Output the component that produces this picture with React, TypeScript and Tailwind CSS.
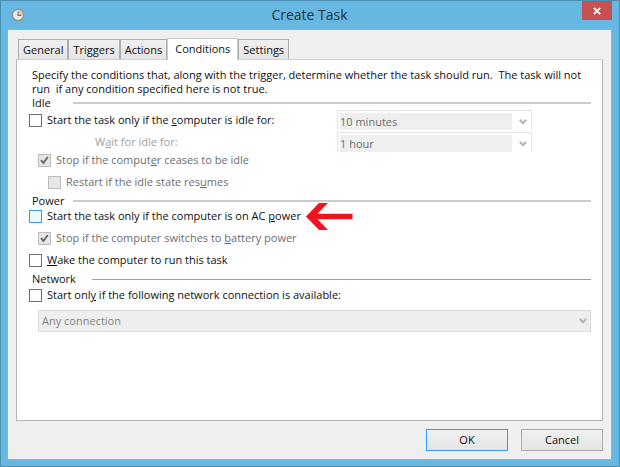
import React, { useState } from "react";
import clsx from "clsx";

const TABS = ["General", "Triggers", "Actions", "Conditions", "Settings"];

function Chevron() {
  return (
    <svg viewBox="0 0 8 6" className="h-[6px] w-2 shrink-0" fill="none" stroke="#b4b4b4" strokeWidth="2">
      <path d="M0.8 0.8 4 4.2 7.2 0.8" />
    </svg>
  );
}

function ClockIcon() {
  return (
    <svg viewBox="0 0 14 14" className="h-[14px] w-[14px]">
      <circle cx="7" cy="7" r="5.6" fill="#e9ebea" stroke="#8d9294" strokeWidth="1.4" />
      <path d="M7 7V2.2A4.8 4.8 0 0 1 11.8 7Z" fill="#f3c98c" />
      <path d="M7 3.4V7.4H10.4" fill="none" stroke="#6b7278" strokeWidth="1.1" />
    </svg>
  );
}

function RedArrow() {
  return (
    <svg viewBox="0 0 48 28" className="-my-2 h-7 w-12" fill="#ee1420" aria-hidden="true">
      <path d="M0 14.5 13 1H22L11.5 11.7H46.5V17.3H11.5L22 28H13Z" />
    </svg>
  );
}

type CheckProps = {
  children: React.ReactNode;
  checked?: boolean;
  disabled?: boolean;
  highlighted?: boolean;
};

function Check({ children, checked, disabled, highlighted }: CheckProps) {
  return (
    <label className={clsx("flex items-center gap-[5px]", disabled && "text-[#6d6d6d]")}>
      <span className="relative flex">
        <input
          type="checkbox"
          defaultChecked={checked}
          disabled={disabled}
          className={clsx(
            "peer h-[13px] w-[13px] appearance-none border",
            disabled
              ? "border-[#bcbcbc] bg-[#e6e6e6]"
              : highlighted
              ? "border-[#3399ff] bg-[#f0f8ff]"
              : "border-[#707070] bg-white"
          )}
        />
        <svg
          viewBox="0 0 13 13"
          className="pointer-events-none absolute inset-0 hidden peer-checked:block"
          fill="none"
          stroke="#6a6a6a"
          strokeWidth="2"
        >
          <path d="M3 6.2 5.4 9 9.8 3" />
        </svg>
      </span>
      <span>{children}</span>
    </label>
  );
}

function Heading({ children, wide }: { children: React.ReactNode; wide?: boolean }) {
  return (
    <div className="flex h-[14px] items-center pl-[3px]">
      <h2 className={wide ? "w-[60px]" : "w-[41px]"}>{children}</h2>
      <span className={clsx("flex-1", wide ? "h-px bg-[#a0a0a0]" : "h-[2px] bg-[#cbcbcb]")} />
    </div>
  );
}

function TimeSelect({ id, label, value }: { id: string; label: string; value: string }) {
  return (
    <div className="flex h-5 w-[195px] border border-b-0 border-[#e3e3e3] pt-[2px] pl-[2px]">
      <select
        id={id}
        aria-label={label}
        disabled
        className="min-w-0 flex-1 appearance-none bg-[#efefef] text-[#6d6d6d] opacity-100"
      >
        <option>{value}</option>
      </select>
      <span className="flex w-[19px] items-center justify-center pl-[3px]">
        <Chevron />
      </span>
    </div>
  );
}

export default function App() {
  const [active, setActive] = useState("Conditions");

  return (
    <div className="flex min-h-screen flex-col border border-[#4a8fb2] bg-[#66b7e1] pr-[7px] pb-[6px] pl-[6px] font-['Open_Sans',sans-serif] text-[11px] leading-[14px] text-[#101010]">
      <header className="grid h-7 grid-cols-[1fr_auto_1fr]">
        <div className="flex items-center pl-1">
          <ClockIcon />
        </div>
        <h1 className="flex items-center text-[14px] text-[#22353f]">Create Task</h1>
        <button
          aria-label="Close"
          className="flex h-[19px] w-[30px] items-center justify-center justify-self-end bg-[#c75050]"
        >
          <svg viewBox="0 0 8 8" className="h-2 w-2" stroke="#fff" strokeWidth="1.8">
            <path d="M0.8 0.8 7.2 7.2M7.2 0.8 0.8 7.2" />
          </svg>
        </button>
      </header>

      <main className="flex flex-1 flex-col border border-[#86b5cc] bg-[#efefef] px-2 pt-2">
        <div role="tablist" className="flex items-end pl-[2px]">
          {TABS.map((tab) => (
            <button
              key={tab}
              role="tab"
              aria-selected={tab === active}
              onClick={() => setActive(tab)}
              className={clsx(
                "border border-b-0 whitespace-nowrap",
                tab === active
                  ? "relative -mb-px h-[22px] border-[#c9c9c9] bg-white px-[7px] pb-[2px]"
                  : "h-5 border-[#acacac] bg-linear-to-b from-[#f0f0f0] to-[#e5e5e5] px-1"
              )}
            >
              {tab}
            </button>
          ))}
        </div>

        <section className="flex-1 border border-[#b4b4b4] border-t-[#cfcfcf] bg-white pt-2 pr-[11px] pb-4 pl-3">
          <p className="pl-[3px]">
            Specify the conditions that, along with the trigger, determine whether the task should run.&nbsp; The task will not
            <br />
            run&nbsp; if any condition specified here is not true.
          </p>

          <Heading>Idle</Heading>
          <div className="flex flex-col gap-[2px] pr-[59px]">
            <div className="flex h-5 items-center justify-between">
              <Check>
                Start the task only if the <u>c</u>omputer is idle for:
              </Check>
              <TimeSelect id="idle-time" label="Idle time" value="10 minutes" />
            </div>
            <div className="flex h-5 items-center justify-between">
              <label htmlFor="wait-time" className="pl-[66px] text-[#a0a0a0]">
                W<u>a</u>it for idle for:
              </label>
              <TimeSelect id="wait-time" label="Wait for idle for" value="1 hour" />
            </div>
          </div>
          <div className="flex flex-col gap-[6px] pb-1 pl-[9px]">
            <div className="flex h-4 items-center">
              <Check checked disabled>
                Stop if the comput<u>e</u>r ceases to be idle
              </Check>
            </div>
            <div className="flex h-4 items-center pl-[10px]">
              <Check disabled>
                Restart if the idle state res<u>u</u>mes
              </Check>
            </div>
          </div>

          <Heading>Power</Heading>
          <div className="flex flex-col gap-[6px] pb-1">
            <div className="flex h-4 items-center gap-[5px]">
              <Check highlighted>
                Start the task only if the computer is on AC <u>p</u>ower
              </Check>
              <RedArrow />
            </div>
            <div className="flex h-4 items-center pl-[9px]">
              <Check checked disabled>
                Stop if the computer switches to <u>b</u>attery power
              </Check>
            </div>
            <div className="flex h-4 items-center">
              <Check>
                <u>W</u>ake the computer to run this task
              </Check>
            </div>
          </div>

          <Heading wide>Network</Heading>
          <div className="flex h-[18px] items-center">
            <Check>
              Start onl<u>y</u> if the following network connection is available:
            </Check>
          </div>
          <div className="mt-[6px] ml-[9px] flex h-[22px] items-center border border-[#dadada] bg-[#eeeeee] pr-[3px] pl-[3px]">
            <select
              aria-label="Network connection"
              disabled
              className="min-w-0 flex-1 appearance-none text-[#838383] opacity-100"
            >
              <option>Any connection</option>
            </select>
            <Chevron />
          </div>
        </section>

        <footer className="flex justify-end gap-[13px] pt-2 pb-2">
          <button className="h-[22px] w-[82px] border border-[#3399ff] bg-linear-to-b from-[#f0f0f0] to-[#e5e5e5]">
            OK
          </button>
          <button className="h-[22px] w-[82px] border border-[#acacac] bg-linear-to-b from-[#f0f0f0] to-[#e5e5e5]">
            Cancel
          </button>
        </footer>
      </main>
    </div>
  );
}
